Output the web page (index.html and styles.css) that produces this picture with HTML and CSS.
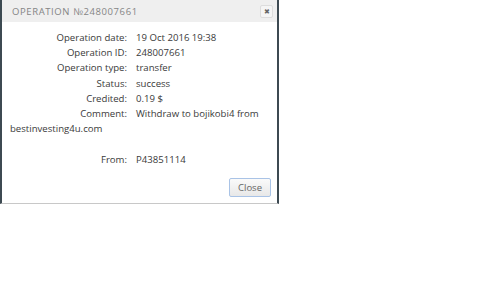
FILE: index.html
```html
<!DOCTYPE html>
<html>
<head>
<meta charset="utf-8">
<link rel="stylesheet" href="styles.css">
</head>
<body>
<div class="dialog">
  <div class="header">
    <span class="title">Operation №248007661</span>
    <span class="x">✖</span>
  </div>
  <div class="body">
    <div class="row"><span class="lbl">Operation date:</span><span class="val">19 Oct 2016 19:38</span></div>
    <div class="row"><span class="lbl">Operation ID:</span><span class="val">248007661</span></div>
    <div class="row"><span class="lbl">Operation type:</span><span class="val">transfer</span></div>
    <div class="row"><span class="lbl">Status:</span><span class="val">success</span></div>
    <div class="row"><span class="lbl">Credited:</span><span class="val">0.19 $</span></div>
    <div class="row"><span class="lbl">Comment:</span><span class="val">Withdraw to bojikobi4 from</span></div>
    <div class="wrap">bestinvesting4u.com</div>
    <div class="row from"><span class="lbl">From:</span><span class="val">P43851114</span></div>
  </div>
  <div class="footer"><button class="close">Close</button></div>
</div>
</body>
</html>
```
FILE: styles.css
```css
html, body { margin: 0; padding: 0; background: #fff; }
body { font-family: "Open Sans", sans-serif; color: #3a3a3a; }
.dialog {
  width: 275px;
  height: 203px;
  border-left: 2px solid #3d4a52;
  border-right: 2px solid #3d4a52;
  border-bottom: 1px solid #c8c8c8;
  display: flex;
  flex-direction: column;
}
.header {
  height: 22px;
  background: #efefef;
  display: flex;
  align-items: center;
  justify-content: space-between;
  padding: 0 4px 0 10px;
}
.title {
  text-transform: uppercase;
  font-size: 9.5px;
  letter-spacing: 0.6px;
  color: #858585;
}
.x {
  width: 11px; height: 11px;
  border: 1px solid #ddd;
  border-radius: 2px;
  background: #f5f5f5;
  font-size: 7px;
  color: #666;
  display: flex; align-items: center; justify-content: center;
}
.body { padding-top: 8px; font-size: 9.6px; }
.row { display: flex; height: 15.2px; align-items: center; }
.lbl { width: 134px; text-align: right; padding-right: 9px; box-sizing: border-box; }
.wrap { height: 15.2px; display: flex; align-items: center; padding-left: 8px; }
.from { margin-top: 16px; }
.footer { margin-top: auto; display: flex; justify-content: flex-end; padding: 0 6px 6px 0; }
.close {
  width: 42px; height: 19px;
  font-family: "Open Sans", sans-serif;
  font-size: 9.5px;
  color: #666;
  background: linear-gradient(#fafafa, #e8e8e8);
  border: 1px solid #a9c3e6;
  border-radius: 2px;
  padding: 0;
}
```
